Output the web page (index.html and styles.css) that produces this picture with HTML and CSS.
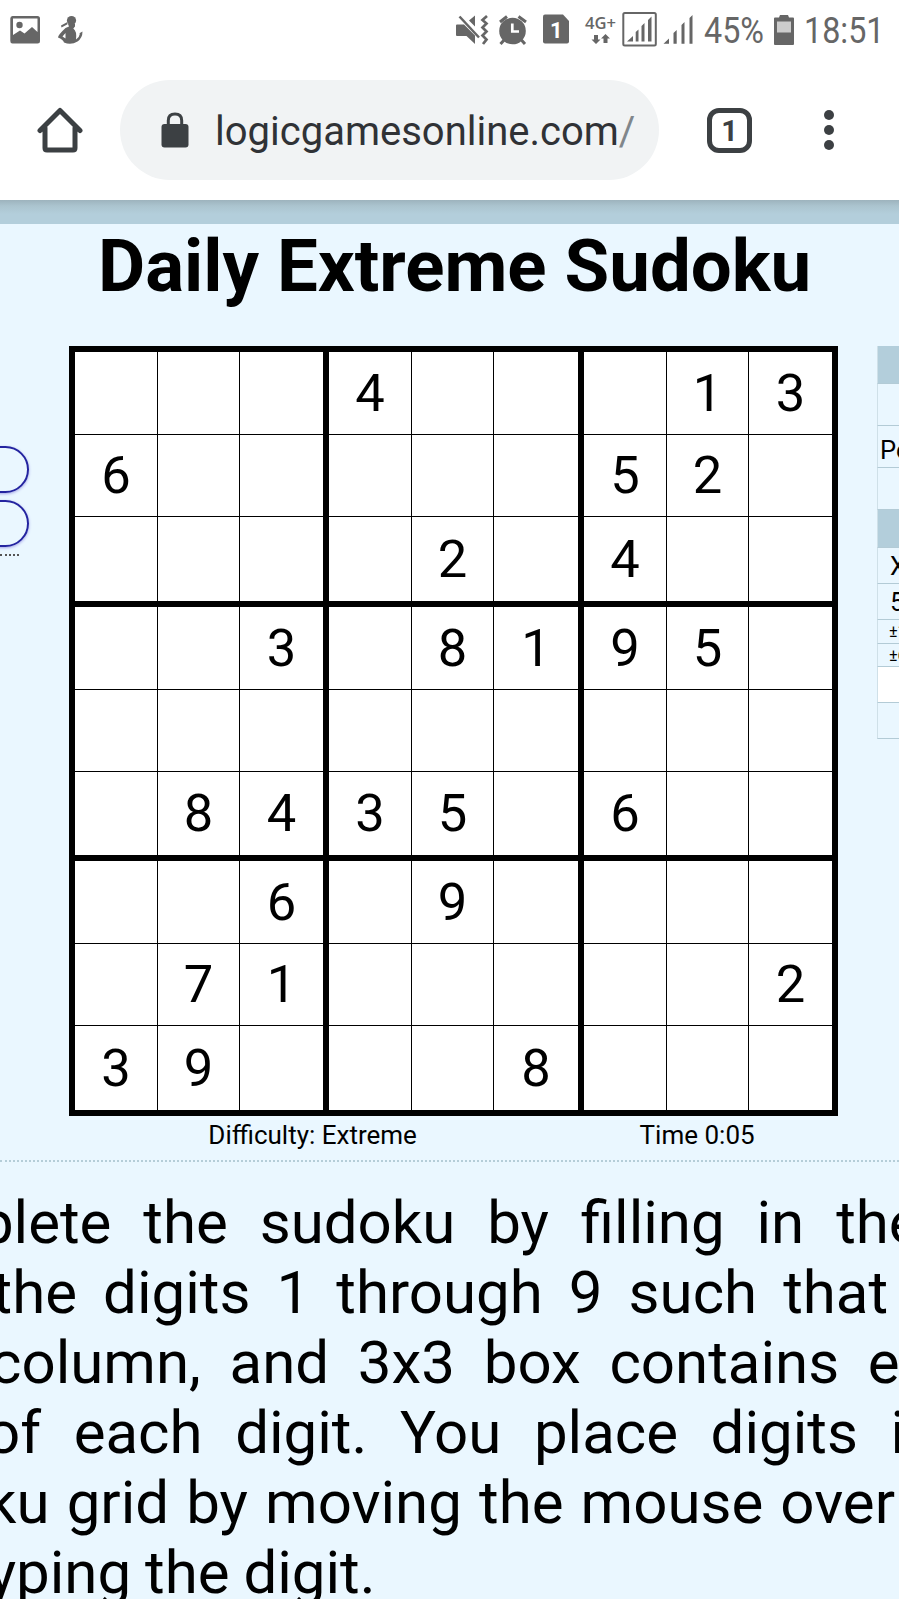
FILE: index.html
```html
<!DOCTYPE html>
<html lang="en">
<head>
<meta charset="utf-8">
<title>Daily Extreme Sudoku</title>
<link rel="stylesheet" href="styles.css">
</head>
<body>
<header class="status">
  <svg class="status-left" width="90" height="60" viewBox="0 0 90 60" fill="#666">
    <path fill-rule="evenodd" d="M12.500 16H37.500Q40 16 40 18.500V41Q40 43.500 37.500 43.500H12.500Q10.300 43.500 10.300 41V18.500Q10.300 16 12.500 16ZM13 18.500V35L20 30.500L24.500 33.500L32 27L37.500 32V18.500Z"/>
    <circle cx="19.500" cy="25" r="3.200"/>
    <circle cx="71.500" cy="20.500" r="4.600"/>
    <path d="M61 25.500L67.500 22V24.200L61.500 27.500ZM68 24H75V26.500L73.300 28.500Q77 31 76 39.500Q79.500 37 80 33.500L79 33.500L82.500 31.500Q82.500 38 77.500 41.500Q71 45.500 64 42.500Q63 39.500 58 37.500Q58 35 65.500 28L69 26.500ZM65.500 33L62.500 36.500L65.500 38.500Z"/>
  </svg>
  <svg class="status-right" width="246" height="60" viewBox="450 0 246 60" fill="#666">
    <path d="M456 25.500Q456 24.500 457 24.500H464L475 35.500V44L466.500 36H457Q456 36 456 35ZM469 20.500L475 15.500V26.500Z"/>
    <path d="M459.500 16.500L479 37.500" stroke="#666" stroke-width="2.500"/>
    <path d="M487 16L482.500 20L486.500 23.500L482.500 27.500L486.500 31.500L482.500 35.500L486.500 39.500L483 44" fill="none" stroke="#666" stroke-width="2.700"/>
    <circle cx="512.500" cy="31" r="13.300"/>
    <path d="M500 22L507 16.500M518.500 16.500L526 22M505 39L500.500 44M520.500 39L525 44" stroke="#666" stroke-width="3"/>
    <path d="M512.300 23.500V31.500H519" fill="none" stroke="#fff" stroke-width="2.700"/>
    <path d="M545 14.500H563L569 21V41.500Q569 43.500 567 43.500H545Q543 43.500 543 41.500V16.500Q543 14.500 545 14.500Z"/>
    <text class="sim" x="550" y="38" fill="#fff">1</text>
    <text class="net" x="585" y="28.500" textLength="31" lengthAdjust="spacingAndGlyphs">4G+</text>
    <path d="M594 35H598V39.500H600.500L596 44L591.500 39.500H594ZM603.500 43V38.500H601L605.500 34L610 38.500H607.500V43Z"/>
    <rect x="623.300" y="13" width="32.500" height="32.500" rx="1.500" fill="none" stroke="#666" stroke-width="2"/>
    <path d="M627 41.500L633 36V41.500ZM635.700 32L638.500 29.500V41.500H635.700ZM641.500 26L644.500 23V41.500H641.500ZM648 20L651.500 16.500V41.500H648ZM663.500 43.800L669 38.500V43.800ZM673.500 33L676.700 30V43.800H673.500ZM681.500 25L684.500 22V43.800H681.500ZM689.500 18L692.500 15V43.800H689.500Z"/>
  </svg>
  <span class="condensed percent"><span>45%</span></span>
  <svg class="battery" width="20" height="30" viewBox="0 0 20 30"><path fill="#666" d="M1 2.500H5L6 0H14L15 2.500H19Q20 2.500 20 3.500V29Q20 30 19 30H1Q0 30 0 29V3.500Q0 2.500 1 2.500Z"/><path fill="#ccc" d="M3 6.500H17V17.500H3Z"/></svg>
  <span class="condensed clock"><span>18:51</span></span>
</header>
<nav class="toolbar">
  <svg class="home" width="46" height="46" viewBox="0 0 46 46" fill="none" stroke="#3c4043" stroke-width="5" stroke-linecap="round" stroke-linejoin="round"><path d="M3 23.500L23 3.500L43 23.500M8 21V41Q8 43 10 43H36Q38 43 38 41V21"/></svg>
  <div class="address">
    <svg class="lock" width="28" height="36" viewBox="0 0 28 36"><rect x=".5" y="12" width="27" height="23.500" rx="3" fill="#3c4043"/><path d="M7.300 13V8.500Q7.300 2 14 2Q20.700 2 20.700 8.500V13" fill="none" stroke="#3c4043" stroke-width="3"/></svg>
    <span class="url">logicgamesonline.com<span class="slash">/</span></span>
  </div>
  <div class="tabs">1</div>
  <div class="menu"><i></i><i></i><i></i></div>
</nav>
<div class="band"></div>
<main class="page">
  <h1>Daily Extreme Sudoku</h1>
  <div class="game">
    <aside class="left">
      <div class="pill"></div>
      <div class="pill"></div>
      <div class="dots"></div>
    </aside>
    <section class="board">
      <div class="grid">
        <div class="box"><b></b><b></b><b></b><b>6</b><b></b><b></b><b></b><b></b><b></b></div>
        <div class="box"><b>4</b><b></b><b></b><b></b><b></b><b></b><b></b><b>2</b><b></b></div>
        <div class="box"><b></b><b>1</b><b>3</b><b>5</b><b>2</b><b></b><b>4</b><b></b><b></b></div>
        <div class="box"><b></b><b></b><b>3</b><b></b><b></b><b></b><b></b><b>8</b><b>4</b></div>
        <div class="box"><b></b><b>8</b><b>1</b><b></b><b></b><b></b><b>3</b><b>5</b><b></b></div>
        <div class="box"><b>9</b><b>5</b><b></b><b></b><b></b><b></b><b>6</b><b></b><b></b></div>
        <div class="box"><b></b><b></b><b>6</b><b></b><b>7</b><b>1</b><b>3</b><b>9</b><b></b></div>
        <div class="box"><b></b><b>9</b><b></b><b></b><b></b><b></b><b></b><b></b><b>8</b></div>
        <div class="box"><b></b><b></b><b></b><b></b><b></b><b>2</b><b></b><b></b><b></b></div>
      </div>
      <div class="info"><span>Difficulty: Extreme</span><span>Time 0:05</span></div>
    </section>
    <aside class="right">
      <div class="row head"></div>
      <div class="row r1"></div>
      <div class="row r2">Personal</div>
      <div class="row r3"></div>
      <div class="row head"></div>
      <div class="row r4">X</div>
      <div class="row r5">5</div>
      <div class="row r6">±1</div>
      <div class="row r6">±6</div>
      <div class="row r7"></div>
      <div class="row r8"></div>
    </aside>
  </div>
  <div class="rule"></div>
  <div class="help">
    <div class="l1">Complete the sudoku by filling in the</div>
    <div class="l2">the digits 1 through 9 such that</div>
    <div class="l3">column, and 3x3 box contains exactly</div>
    <div class="l4">of each digit. You place digits in</div>
    <div class="l5">sudoku grid by moving the mouse over</div>
    <div class="l6">typing the digit.</div>
  </div>
</main>
</body>
</html>
```
FILE: styles.css
```css
* { box-sizing: border-box; }
html, body { margin: 0; height: 1599px; overflow: hidden; }
body { width: 899px; background: #fff; color: #000; font-family: Roboto, "Liberation Sans", sans-serif; }
svg { display: block; flex: none; }

.status { display: flex; height: 60px; color: #666; }
.status-right { margin-left: 360px; }
.sim { font-size: 22px; font-weight: 700; }
.net { font-family: "Open Sans", sans-serif; font-size: 17px; font-weight: 600; }
.condensed { flex: none; height: 60px; line-height: 62px; font-size: 36.5px; }
.condensed span { display: block; transform: scaleX(.885); transform-origin: left; white-space: nowrap; }
.percent { width: 60px; margin-left: 8px; }
.battery { margin: 15px 0 0 10px; }
.clock { width: 80px; margin-left: 10px; }

.toolbar { display: flex; align-items: center; height: 140px; }
.home { margin-left: 37px; }
.address { display: flex; align-items: center; width: 539px; height: 100px; margin-left: 37px; padding-left: 41px; border-radius: 50px; background: #f1f3f4; }
.url { margin-left: 26px; color: #303236; font-size: 40px; line-height: 50px; padding-top: 3px; white-space: nowrap; }
.slash { color: #80868b; }
.tabs { width: 45px; height: 45px; margin-left: 48px; border: 5px solid #3c4043; border-radius: 12px; color: #3c4043; font-size: 29px; line-height: 37px; font-weight: 700; text-align: center; }
.menu { display: flex; flex-direction: column; gap: 5px; margin-left: 72px; }
.menu i { width: 10px; height: 10px; border-radius: 50%; background: #3c4043; }

.band { height: 24px; background: linear-gradient(#9db3bd, #abc4cf 6px, #b3cedb 14px); }
.page { height: 1375px; background: #eaf7ff; overflow: hidden; }
h1 { margin: 0; height: 122px; padding: 0 0 0 98px; font-size: 72.600px; line-height: 85px; font-weight: 700; white-space: nowrap; }
.game { display: flex; height: 814px; }
.left { width: 69px; padding-top: 100px; flex: none; }
.pill { width: 59px; height: 47px; margin: 0 0 7px -30px; border: 2px solid #2424a0; border-radius: 24px; box-shadow: 0 1px 3px #a5a5e8; }
.dots { width: 19px; border-top: 2px dotted #555; }
.board { flex: none; width: 769px; }
.grid { display: grid; grid-template: 249px 248px 249px / 248px 249px 248px; gap: 6px; padding: 6px; width: 769px; height: 770px; background: #000; }
.box { display: grid; grid-template: 82px 81px 1fr / 82px 81px 1fr; gap: 1px; }
.box b { display: flex; align-items: center; justify-content: center; min-width: 0; min-height: 0; padding-bottom: 1px; background: #fff; font-size: 52.500px; line-height: 60px; font-weight: 400; }
.info { display: flex; padding-top: 4px; font-size: 26px; line-height: 30px; text-align: center; }
.info span:first-child { width: 491px; }
.info span:last-child { width: 284px; }

.right { width: 22px; margin-left: 39px; flex: none; overflow: hidden; }
.row { overflow: hidden; white-space: nowrap; border-bottom: 1px solid #b3cbd6; border-left: 1px solid #cfe0e8; font-size: 25.500px; }
.head { height: 38px; background: #b3cedb; }
.r1 { height: 42px; }
.r2 { height: 42px; padding-left: 2px; line-height: 48px; }
.r3 { height: 42px; }
.r4 { height: 36px; padding-left: 12px; line-height: 36px; }
.r5 { height: 36px; padding-left: 12px; line-height: 37px; }
.r6 { height: 23.500px; padding-left: 11px; font-size: 16px; line-height: 23px; }
.r7 { height: 36px; background: #fff; }
.r8 { height: 36px; }

.rule { border-top: 2px dotted #b5cdd8; }
.help { padding-top: 26px; font-size: 60px; line-height: 70.100px; white-space: nowrap; }
.l1 { margin-left: -146px; word-spacing: 17px; }
.l2 { margin-left: -7.500px; word-spacing: 11.200px; }
.l3 { margin-left: -10px; word-spacing: 13.800px; }
.l4 { margin-left: -14px; word-spacing: 17.700px; }
.l5 { margin-left: -146px; word-spacing: 2.200px; }
.l6 { margin-left: -32px; word-spacing: -1px; }
```
